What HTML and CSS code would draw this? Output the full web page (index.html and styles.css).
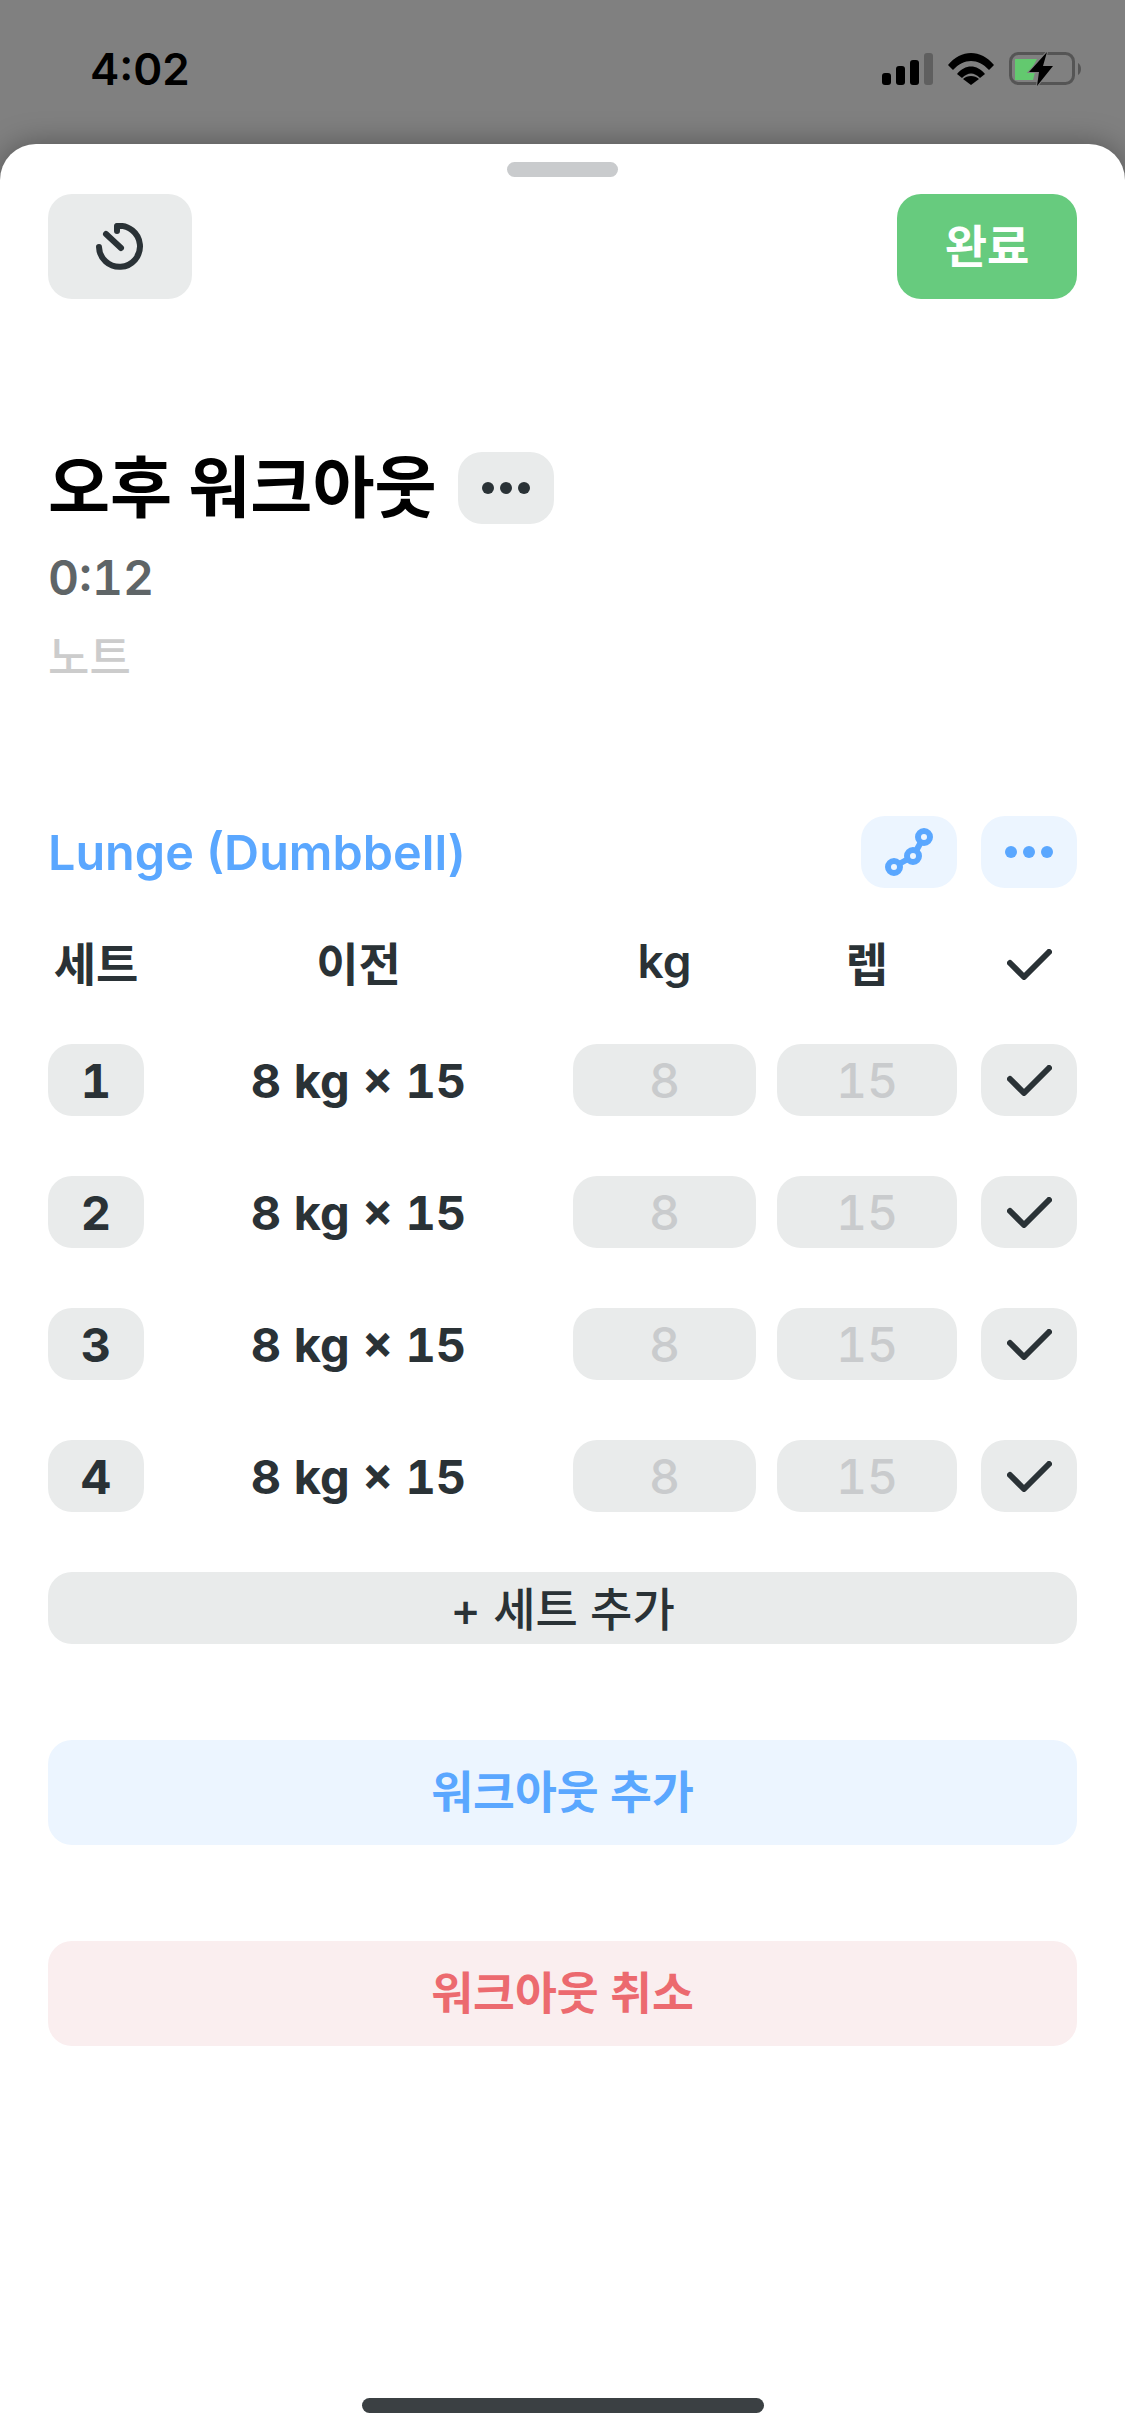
FILE: index.html
```html
<!DOCTYPE html>
<html lang="ko">
<head>
    <meta charset="UTF-8">
    <title>오후 워크아웃</title>
    <link rel="stylesheet" href="styles.css">
</head>
<body>

<div class="status-bar">
    <span class="clock">4:02</span>
    <div class="status-icons">
        <svg class="icon-signal" viewBox="0 0 51 32">
            <rect x="0" y="20" width="9" height="12" rx="3"/>
            <rect x="14" y="13" width="9" height="19" rx="3"/>
            <rect x="28" y="7" width="9" height="25" rx="3"/>
            <rect class="faded" x="42" y="0" width="9" height="32" rx="3"/>
        </svg>
        <svg class="icon-wifi" viewBox="0 0 46 33">
            <path d="M0 13 C13 -3 33 -3 46 13 L41 18 C30 6 16 6 5 18 Z"/>
            <path d="M9 22 C17 12 29 12 37 22 L32 26 C26 20 20 20 14 26 Z"/>
            <path d="M15 27 C19 23 27 23 31 27 L23 33 Z"/>
        </svg>
        <svg class="icon-battery" viewBox="0 0 73 36">
            <rect class="battery-shell" x="1.500" y="1.500" width="63" height="30" rx="8"/>
            <path class="battery-cap" d="M69 11 C73 13 73 21 69 23 Z"/>
            <path class="battery-fill" d="M6 7 H28 L21 20 H26 L24 28 H6 Z"/>
            <path class="battery-bolt" d="M38 0 L20 20 H30 L28 34 L44 14 H34 Z"/>
        </svg>
    </div>
</div>

<div class="sheet">
    <div class="handle"></div>

    <div class="top-row">
        <button class="btn btn-timer">
            <svg class="icon-timer" viewBox="0 0 48 48">
                <path d="M21 8 V3 A20.500 20.500 0 1 1 3 24"/>
                <path d="M10 11 L25 25"/>
            </svg>
        </button>
        <button class="btn btn-done">완료</button>
    </div>

    <div class="title-row">
        <h1>오후 워크아웃</h1>
        <button class="btn btn-more">
            <svg class="icon-dots" viewBox="0 0 48 12"><circle cx="6" cy="6" r="6"/><circle cx="24" cy="6" r="6"/><circle cx="42" cy="6" r="6"/></svg>
        </button>
    </div>
    <div class="duration">0:12</div>
    <div class="note">노트</div>

    <div class="exercise-row">
        <span class="exercise-name">Lunge (Dumbbell)</span>
        <button class="btn btn-light">
            <svg class="icon-chain" viewBox="0 0 48 48">
                <circle cx="9" cy="39" r="6"/>
                <circle cx="28" cy="28" r="6"/>
                <circle cx="39" cy="9" r="6"/>
                <path d="M14 36 L23 31"/>
                <path d="M31 23 L36 14"/>
            </svg>
        </button>
        <button class="btn btn-light">
            <svg class="icon-dots" viewBox="0 0 48 12"><circle cx="6" cy="6" r="6"/><circle cx="24" cy="6" r="6"/><circle cx="42" cy="6" r="6"/></svg>
        </button>
    </div>

    <div class="set-grid set-head">
        <span>세트</span>
        <span>이전</span>
        <span>kg</span>
        <span>렙</span>
        <span class="check-cell"><svg class="icon-check" viewBox="0 0 45 31"><path d="M3 14 L17 28 L42 3"/></svg></span>
    </div>

    <div class="set-grid">
        <span class="pill">1</span>
        <span class="prev">8 kg × 15</span>
        <span class="pill pill-input">8</span>
        <span class="pill pill-input">15</span>
        <span class="pill pill-check"><svg class="icon-check" viewBox="0 0 45 31"><path d="M3 14 L17 28 L42 3"/></svg></span>
    </div>
    <div class="set-grid">
        <span class="pill">2</span>
        <span class="prev">8 kg × 15</span>
        <span class="pill pill-input">8</span>
        <span class="pill pill-input">15</span>
        <span class="pill pill-check"><svg class="icon-check" viewBox="0 0 45 31"><path d="M3 14 L17 28 L42 3"/></svg></span>
    </div>
    <div class="set-grid">
        <span class="pill">3</span>
        <span class="prev">8 kg × 15</span>
        <span class="pill pill-input">8</span>
        <span class="pill pill-input">15</span>
        <span class="pill pill-check"><svg class="icon-check" viewBox="0 0 45 31"><path d="M3 14 L17 28 L42 3"/></svg></span>
    </div>
    <div class="set-grid">
        <span class="pill">4</span>
        <span class="prev">8 kg × 15</span>
        <span class="pill pill-input">8</span>
        <span class="pill pill-input">15</span>
        <span class="pill pill-check"><svg class="icon-check" viewBox="0 0 45 31"><path d="M3 14 L17 28 L42 3"/></svg></span>
    </div>

    <button class="btn btn-add-set">+ 세트 추가</button>
    <button class="btn btn-wide btn-add-workout">워크아웃 추가</button>
    <button class="btn btn-wide btn-cancel">워크아웃 취소</button>

    <div class="home-bar"></div>
</div>

</body>
</html>
```
FILE: styles.css
```css
* {
    box-sizing: border-box;
}
html, body {
    height: 2436px;
    overflow: hidden;
}
body {
    margin: 0;
    background-color: #808080;
    font-family: Inter, "Noto Sans CJK KR", sans-serif;
    color: #2a3236;
}
h1 {
    margin: 0;
    font-size: 67.5px;
    font-weight: 700;
    color: #000;
    line-height: 72px;
}

.status-bar {
    height: 144px;
    padding: 50px 43px 0 90px;
    display: flex;
    justify-content: space-between;
    align-items: flex-start;
}
.clock {
    font-size: 44px;
    font-weight: 600;
    line-height: 38px;
    color: #000;
}
.status-icons {
    display: flex;
    gap: 15px;
    padding-top: 2px;
}
.status-icons svg {
    display: block;
    fill: #000;
}
.icon-signal {
    width: 51px;
    height: 32px;
    margin-top: 1px;
}
.icon-signal .faded {
    fill: #5f5f5f;
}
.icon-wifi {
    width: 46px;
    height: 33px;
}
.icon-battery {
    width: 73px;
    height: 36px;
}
.battery-shell {
    fill: none;
    stroke: #555;
    stroke-width: 3;
}
.status-icons .battery-cap {
    fill: #555;
}
.status-icons .battery-fill {
    fill: #63c96f;
}
.battery-bolt {
    stroke: #808080;
    stroke-width: 2;
    paint-order: stroke;
}

.sheet {
    position: relative;
    height: 2292px;
    padding: 18px 48px 0;
    background: white;
    border-radius: 36px 36px 0 0;
    box-shadow: 0 0 30px rgba(0, 0, 0, 0.35);
}
.handle {
    width: 111px;
    height: 15px;
    margin: 0 auto;
    background-color: #c9cbcd;
    border-radius: 8px;
}

.btn {
    display: flex;
    align-items: center;
    justify-content: center;
    border: none;
    padding: 0;
    border-radius: 24px;
    font-family: inherit;
    font-weight: 600;
    cursor: pointer;
}
.top-row {
    display: flex;
    justify-content: space-between;
    margin-top: 17px;
}
.btn-timer {
    width: 144px;
    height: 105px;
    background-color: #e9ebeb;
}
.icon-timer {
    width: 48px;
    height: 48px;
    fill: none;
    stroke: #2a3236;
    stroke-width: 6;
    stroke-linecap: round;
    stroke-linejoin: round;
}
.btn-done {
    width: 180px;
    height: 105px;
    padding-bottom: 8px;
    background-color: #67cb7e;
    color: white;
    font-size: 46px;
    font-weight: 700;
}

.title-row {
    display: flex;
    align-items: center;
    gap: 21px;
    margin-top: 153px;
}
.btn-more {
    width: 96px;
    height: 72px;
    background-color: #e9ebeb;
}
.icon-dots {
    width: 48px;
    height: 12px;
    fill: #2a3236;
}
.duration {
    margin-top: 30px;
    font-size: 48px;
    line-height: 48px;
    font-weight: 600;
    font-variant-numeric: tabular-nums;
    color: #5f6567;
}
.note {
    margin-top: 30px;
    font-size: 45px;
    line-height: 52px;
    font-weight: 500;
    color: #cccccc;
}

.exercise-row {
    display: flex;
    align-items: center;
    gap: 24px;
    margin-top: 132px;
}
.exercise-name {
    flex: 1;
    font-size: 48.500px;
    font-weight: 600;
    color: #5aa7ff;
}
.btn-light {
    width: 96px;
    height: 72px;
    background-color: #ecf5ff;
}
.btn-light .icon-dots {
    fill: #5aa7ff;
}
.icon-chain {
    width: 48px;
    height: 48px;
    fill: none;
    stroke: #5aa7ff;
    stroke-width: 6;
}

.set-grid {
    display: grid;
    grid-template-columns: 96px 1fr 183px 180px 99px;
    column-gap: 21px;
    align-items: center;
    height: 72px;
    margin-top: 60px;
    font-size: 47px;
    font-weight: 700;
    font-variant-numeric: tabular-nums;
    text-align: center;
}
.set-head {
    margin-top: 37px;
    margin-bottom: -13px;
    font-size: 46px;
    font-weight: 600;
}
.check-cell {
    display: flex;
    justify-content: center;
    padding: 6px 0 0 3px;
}
.pill {
    display: flex;
    align-items: center;
    justify-content: center;
    height: 72px;
    background-color: #e9ebeb;
    border-radius: 24px;
}
.pill-input {
    color: #c9cbcd;
    font-size: 48px;
    font-weight: 500;
}
.pill-check {
    width: 96px;
    justify-self: end;
}
.icon-check {
    width: 45px;
    height: 31px;
    fill: none;
    stroke: #2a3236;
    stroke-width: 6;
    stroke-linecap: round;
    stroke-linejoin: round;
}

.btn-add-set {
    width: 100%;
    height: 72px;
    margin-top: 60px;
    padding-bottom: 4px;
    background-color: #e9ebeb;
    color: #2a3236;
    font-size: 46px;
    font-weight: 500;
}
.btn-wide {
    width: 100%;
    height: 105px;
    padding-bottom: 8px;
    font-size: 45.500px;
}
.btn-add-workout {
    margin-top: 96px;
    background-color: #ecf5ff;
    color: #5aa7ff;
}
.btn-cancel {
    margin-top: 96px;
    background-color: #faeeef;
    color: #ec6a6f;
}

.home-bar {
    position: absolute;
    left: 362px;
    bottom: 23px;
    width: 402px;
    height: 15px;
    background-color: #3b4043;
    border-radius: 8px;
}
```
